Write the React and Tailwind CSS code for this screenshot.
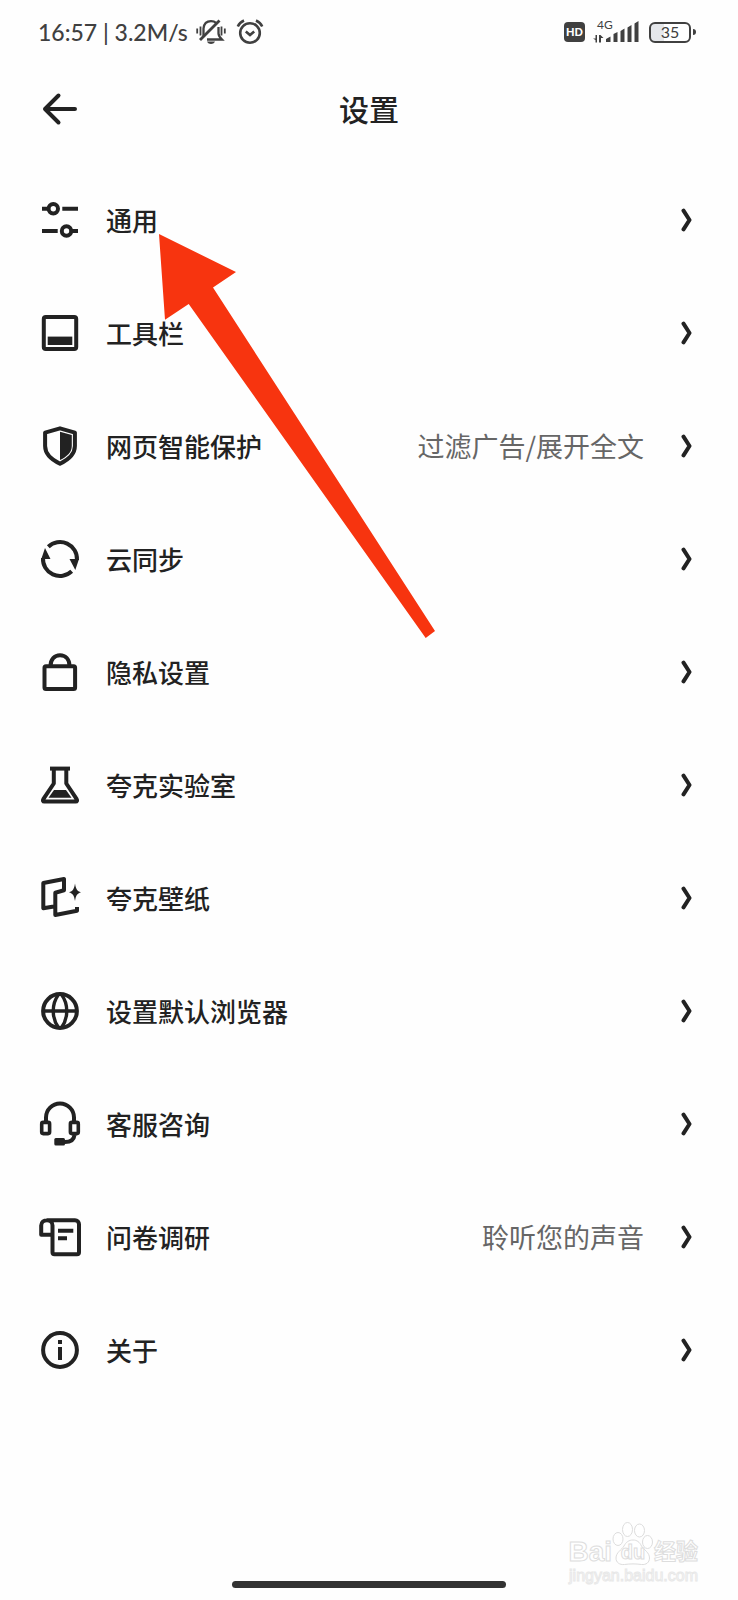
const AJUSTES = [
  { key: 'general',   label: '通用',           Icono: IconoGeneral },
  { key: 'toolbar',   label: '工具栏',         Icono: IconoBarra },
  { key: 'protect',   label: '网页智能保护',   Icono: IconoEscudo, nota: '过滤广告/展开全文' },
  { key: 'sync',      label: '云同步',         Icono: IconoSync },
  { key: 'privacy',   label: '隐私设置',       Icono: IconoCandado },
  { key: 'lab',       label: '夸克实验室',     Icono: IconoMatraz },
  { key: 'wallpaper', label: '夸克壁纸',       Icono: IconoFondo },
  { key: 'browser',   label: '设置默认浏览器', Icono: IconoGlobo },
  { key: 'support',   label: '客服咨询',       Icono: IconoSoporte },
  { key: 'survey',    label: '问卷调研',       Icono: IconoEncuesta, nota: '聆听您的声音' },
  { key: 'about',     label: '关于',           Icono: IconoInfo },
]

function Icono({ children }) {
  return (
    <svg viewBox="0 0 48 48" className="size-12 shrink-0" fill="none" stroke="currentColor" strokeWidth="4" aria-hidden="true">
      {children}
    </svg>
  )
}

function IconoGeneral() {
  return (
    <Icono>
      <path d="M6 12.7h6M26.3 12.7H42M6 35h15.7M36 35h6" />
      <circle cx="17.3" cy="12.7" r="4.7" />
      <circle cx="30.5" cy="35" r="4.7" />
    </Icono>
  )
}

function IconoBarra() {
  return (
    <Icono>
      <rect x="7.8" y="8" width="32.4" height="32" rx="2" />
      <path d="M11.7 27.6h24.6V36H11.7z" fill="currentColor" stroke="none" />
    </Icono>
  )
}

function IconoEscudo() {
  return (
    <Icono>
      <path d="M24 6.3 38.9 10.6V24c0 8-6 13.5-14.9 17.7C15.1 37.5 9.1 32 9.1 24V10.6z" strokeLinejoin="round" />
      <path d="M24 9.7 35.8 13v11c0 6-4.5 10.5-11.8 14z" fill="currentColor" stroke="none" />
    </Icono>
  )
}

function IconoSync() {
  return (
    <Icono>
      <path d="M12.3 11.7A17 17 0 0 1 41 25M35.7 36.3A17 17 0 0 1 7 23" />
      <path d="M33.5 24H43l-3.7 11zM14.500 24H5.300L9 13z" fill="currentColor" stroke="none" />
    </Icono>
  )
}

function IconoCandado() {
  return (
    <Icono>
      <rect x="8.5" y="18.2" width="30.6" height="22.8" rx="1.5" />
      <path d="M14.5 18c0-6.8 4-10.8 9.5-10.8s9.5 4 9.5 10.8" />
    </Icono>
  )
}

function IconoMatraz() {
  return (
    <Icono>
      <path d="M14 7.6h20" />
      <path d="M17.8 8v14.5L7.3 38.2c-.8 1.3-.3 2.3 1 2.3h31.4c1.3 0 1.8-1 1-2.3L30.3 22.5V8" strokeLinejoin="round" />
      <path d="M18 29h12l5.5 7.8h-23z" fill="currentColor" stroke="none" />
    </Icono>
  )
}

function IconoFondo() {
  return (
    <Icono>
      <path d="M19.3 32.3 7.3 34.2V9L28 5v11.3l-8.7 2.4V41L41 36.7V33" strokeLinejoin="round" />
      <path d="M39 9.5c.9 5.500 2 7.500 6 8.800-4 1.300-5.100 3.300-6 8.800-.9-5.500-2-7.500-6-8.800 4-1.300 5.100-3.300 6-8.800z" fill="currentColor" stroke="none" />
    </Icono>
  )
}

function IconoGlobo() {
  return (
    <Icono>
      <circle cx="24" cy="24" r="16.9" />
      <path d="M7 24h34" strokeWidth="3.4" />
      <path d="M22.5 7.5C15.5 17 15.5 31 22.5 40.5M25.5 7.5c7 9.5 7 23.5 0 33" strokeWidth="3.4" />
    </Icono>
  )
}

function IconoSoporte() {
  return (
    <Icono>
      <path d="M10 21v-3.500a14 14 0 0 1 28 0V21M38.500 35c-.5 4.500-3.500 7-9.500 7" />
      <rect x="5.7" y="22.4" width="7.9" height="11.2" rx="1.5" strokeWidth="3.6" />
      <rect x="34.4" y="22.4" width="7.900" height="11.200" rx="1.5" strokeWidth="3.6" />
      <rect x="18.3" y="38" width="10.7" height="7.6" rx="1.5" fill="currentColor" stroke="none" />
    </Icono>
  )
}

function IconoEncuesta() {
  return (
    <Icono>
      <path d="M10.500 7.200H39a4 4 0 0 1 4 4V39.200a2 2 0 0 1-2 2H18.500a2 2 0 0 1-2-2V12.500c0-3.500-2.500-5.300-5.500-5.300s-5.800 1.800-5.800 5.300v9.300h11" strokeLinejoin="round" />
      <path d="M22 17.7h15.3M22 25.2h9" />
    </Icono>
  )
}

function IconoInfo() {
  return (
    <Icono>
      <circle cx="24" cy="24" r="16.9" />
      <path d="M24 14v4M24 21v13" />
    </Icono>
  )
}

function Flecha() {
  return (
    <svg viewBox="0 0 12 24" className="w-3 h-6 shrink-0" fill="none" stroke="currentColor" strokeWidth="4" strokeLinecap="round" strokeLinejoin="round" aria-hidden="true">
      <path d="M3.500 2.700 9.500 12l-6 9.300" />
    </svg>
  )
}

function BarraEstado() {
  return (
    <div className="flex items-center justify-between h-16 pl-[38px] pr-[42px] text-[#404040] font-['Lato','Noto_Sans_CJK_SC',sans-serif]">
      <div className="flex items-center">
        <span className="text-[23px] leading-8 font-medium">16:57 | 3.2M/s</span>
        {/* silencio */}
        <svg viewBox="0 0 30 26" className="w-[30px] h-[26px] ml-2" fill="none" stroke="currentColor" strokeWidth="2.3" aria-hidden="true">
          <path d="M1.2 9.500v5M4.500 7.500v9M25.500 7.500v9M28.800 9.500v5" strokeWidth="1.8" />
          <path d="M7.500 17.500V9.500C8 4.800 11 2.200 15 2.200c2 0 3.800.6 5 1.700M22.500 8v6.500c0 2 1.500 4 3.500 6H11" />
          <path d="M23.500 1.500 4 21" strokeWidth="2.8" />
          <path d="M11 22.500h8c-1 1.800-2.300 2.500-4 2.500s-3-.7-4-2.500z" fill="currentColor" stroke="none" />
        </svg>
        {/* alarma */}
        <svg viewBox="0 0 28 26" className="w-7 h-[26px] ml-2.5" fill="none" stroke="currentColor" strokeWidth="2.6" aria-hidden="true">
          <circle cx="14" cy="14" r="9.8" />
          <path d="M1.800 7.500C3 4.800 5 2.800 8 1.500M26.200 7.500C25 4.800 23 2.800 20 1.500M9.800 12.500l4.200 3.500 4.200-3.500" />
        </svg>
      </div>

      <div className="flex items-center">
        <span className="flex items-center justify-center w-[21px] h-5 rounded bg-[#404040] text-white text-[11px] font-black">HD</span>
        <span className="relative ml-2 w-[46px] h-[22px]">
          <span className="absolute left-1 -top-1 text-xs leading-4">4G</span>
          <svg viewBox="0 0 46 22" className="w-full h-full" fill="currentColor" aria-hidden="true">
            <path d="M4 14v7.500H2.500V19L0 17.500h2.500V14zM6 14h1.500l3 3H8v4.500H6z" />
            <path d="M13 21v-3l4.500-2.500V21zM20.500 21v-8l4-2v10zM27.500 21v-11l4-2.500V21zM34.500 21V6.500l4-2.500v17zM41.500 21V2.500l4-2.500v21z" />
          </svg>
        </span>
        <span className="flex items-center justify-center ml-2.5 w-[42px] h-[21px] rounded-md border-2 border-[#404040] bg-linear-to-r from-gray-200 from-35% to-white to-35% text-base leading-4">35</span>
        <span className="ml-0.5 w-[3px] h-1.5 rounded-r-sm bg-[#404040]" />
      </div>
    </div>
  )
}

function MarcaAgua() {
  return (
    <div className="absolute right-10 bottom-3.5 flex flex-col items-end text-white font-['Liberation_Sans','Noto_Sans_CJK_SC',sans-serif]">
      <div className="flex items-end h-11 font-bold [-webkit-text-stroke:1px_#dddddd]">
        <span className="text-[28px] leading-7">Bai</span>
        <span className="relative flex justify-center w-[42px] h-11">
          <svg viewBox="0 0 42 44" className="absolute inset-0" fill="#ffffff" stroke="#dddddd" aria-hidden="true">
            <ellipse cx="6" cy="17" rx="5" ry="6.5" />
            <ellipse cx="15.5" cy="7.5" rx="5" ry="7" />
            <ellipse cx="27.5" cy="8.5" rx="5" ry="6.5" />
            <ellipse cx="35.5" cy="20" rx="5" ry="6.5" />
            <path d="M21 18c4 0 6.500 2 8.500 6 2.500 4 8 6.500 8 12 0 4.500-3.500 7-8 6.500-6-.8-11-.8-17 0-5 .5-8.500-2-8.500-6.500 0-5.500 5.500-8 8-12 2-4 5-6 9-6z" />
          </svg>
          <span className="relative self-end text-xl leading-7">du</span>
        </span>
        <span className="text-[22px] leading-7">经验</span>
      </div>
      <p className="text-base leading-5 [-webkit-text-stroke:1px_#e8e8e8]">jingyan.baidu.com</p>
    </div>
  )
}

export default function App() {
  return (
    <div className="relative flex flex-col min-h-screen bg-[#fefefe] text-[#222222] font-['Noto_Sans_CJK_SC',sans-serif]">
      <BarraEstado />

      <header className="grid grid-cols-[48px_1fr_48px] items-center h-[90px] px-9">
        <button type="button" aria-label="返回" className="flex items-center justify-center size-12">
          <svg viewBox="0 0 36 36" className="size-9" fill="none" stroke="currentColor" strokeWidth="4" strokeLinecap="round" strokeLinejoin="round" aria-hidden="true">
            <path d="M16.500 4.500 3 18l13.500 13.500M3 18h30" />
          </svg>
        </button>
        <h1 className="pb-0.5 text-center text-[30px] leading-10 font-medium">设置</h1>
      </header>

      <ul className="pt-[9px]">
        {AJUSTES.map(({ key, label, nota, Icono: Dibujo }) => (
          <li key={key}>
            <button type="button" className="flex items-center w-full h-[113px] pl-9 pr-[46px] text-left leading-10">
              <Dibujo />
              <span className="flex-1 ml-[22px] text-[26px] font-medium">{label}</span>
              {nota && <span className="mr-9 text-[27px] text-[#666666]">{nota}</span>}
              <Flecha />
            </button>
          </li>
        ))}
      </ul>

      <footer className="flex justify-center mt-auto pb-3">
        <div className="w-[37%] h-[7px] rounded-full bg-[#333333]" />
      </footer>

      <MarcaAgua />

      {/* flecha roja hacia 通用 */}
      <svg viewBox="0 0 276 404" className="absolute left-[159px] top-[234px] w-[276px] h-[404px] pointer-events-none" fill="#f7340f" aria-hidden="true">
        <path d="M0 0 77 38 54 53.500 276 397l-9.300 7L29.700 70 6 85.700z" />
      </svg>
    </div>
  )
}
